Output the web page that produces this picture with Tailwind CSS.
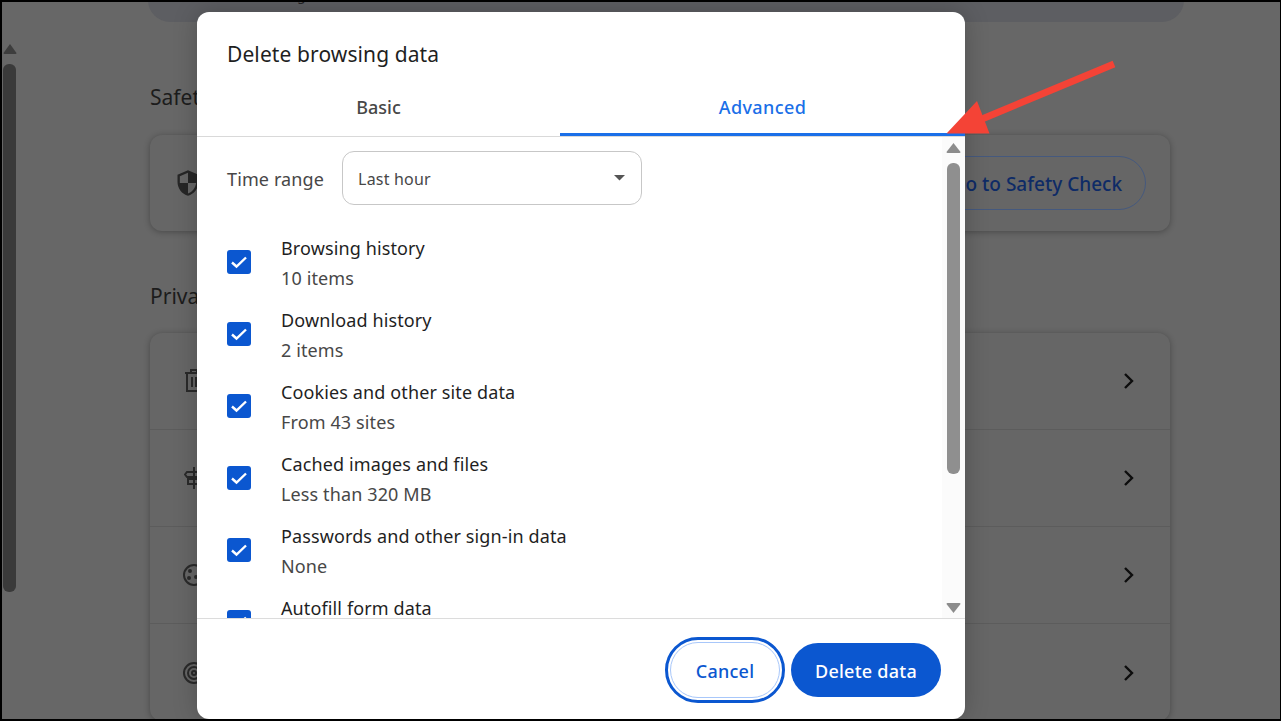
<!DOCTYPE html>
<html lang="en">
<head>
    <meta charset="UTF-8">
    <title>Delete browsing data</title>
    <script src="https://cdn.jsdelivr.net/npm/@tailwindcss/browser@4"></script>
</head>
<body class="bg-black font-['Noto_Sans',sans-serif]">
<div class="relative w-[1281px] h-[721px] overflow-hidden bg-black pt-[2px] pl-[2px] pr-px pb-[2px]">

    <!-- Dimmed settings page behind the dialog -->
    <div class="flex h-[717px] overflow-hidden bg-[#676767]">
        <!-- Page scrollbar -->
        <div class="w-[15px] shrink-0 flex flex-col items-center pt-[42px]">
            <svg width="14" height="10" viewBox="0 0 14 10"><path d="M7 0 L13.5 9 Q13.5 10 12.5 10 L1.5 10 Q.5 10 .5 9 Z" fill="#3d3d3d"/></svg>
            <div class="mt-[10px] w-[13px] h-[528px] rounded-[6px] bg-[#3a3a3a]"></div>
        </div>

        <!-- Settings column -->
        <main class="pl-[133px] w-[1020px] box-content">
            <div class="-mt-[24px] -ml-[2px] w-[1036px] h-[44px] rounded-[24px] bg-[#5d5e62] flex items-center pl-[30px] text-[14px] text-[#222] gap-[14px]">
                <svg width="20" height="20" viewBox="0 0 20 20" fill="none" stroke="#222" stroke-width="2" class="-mt-[12px]"><circle cx="8" cy="8" r="5"/><path d="M12 12l5 5"/></svg>
                <span class="-mt-[12px]">Search settings</span>
            </div>

            <h2 class="mt-[62px] text-[21px] leading-[26px] text-[#1c1c1c]">Safety Check</h2>
            <section class="mt-[25px] h-[96px] rounded-[12px] bg-[#666666] shadow-[0_1px_6px_rgba(0,0,0,0.3)] flex items-center justify-between pl-[24px] pr-[24px]">
                <svg width="28" height="28" viewBox="0 0 24 24"><path d="M12 1L3 5v6c0 5.550 3.840 10.740 9 12 5.160-1.260 9-6.450 9-12V5l-9-4zm0 10.990h7c-.53 4.120-3.280 7.790-7 8.940V12H5V6.300l7-3.110v8.800z" fill="#262626"/></svg>
                <div class="h-[54px] w-[232px] rounded-full border border-[#45597e] flex items-center justify-end pt-[2px] pr-[23px] text-[19px] font-medium text-[#0e2b66]">Go to Safety Check</div>
            </section>

            <h2 class="mt-[52px] text-[21px] leading-[26px] text-[#1c1c1c]">Privacy and security</h2>
            <section class="mt-[24px] rounded-[12px] bg-[#666666] shadow-[0_1px_6px_rgba(0,0,0,0.3)] divide-y divide-[#5c5c5c]">
                <div class="h-[97px] flex items-center justify-between pl-[34px] pr-[34px]">
                    <svg width="20" height="24" viewBox="0 0 20 24" fill="none" stroke="#2a2a2a" stroke-width="2"><path d="M1 4h18M7 4V1h6v3M3 4v18h14V4M8 8v10M12 8v10"/></svg>
                    <svg width="14" height="18" viewBox="0 0 14 18" fill="none" stroke="#0d0d0d" stroke-width="2.4"><path d="M3 2l7 7-7 7"/></svg>
                </div>
                <div class="h-[97px] flex items-center justify-between pl-[34px] pr-[34px]">
                    <svg width="20" height="24" viewBox="0 0 20 24" fill="none" stroke="#2a2a2a" stroke-width="2"><path d="M10 1v22M3 6h14v5H3L1 8.500zM17 13H4v5h13l2-2.500z"/></svg>
                    <svg width="14" height="18" viewBox="0 0 14 18" fill="none" stroke="#0d0d0d" stroke-width="2.4"><path d="M3 2l7 7-7 7"/></svg>
                </div>
                <div class="h-[97px] flex items-center justify-between pl-[32px] pr-[34px]">
                    <svg width="24" height="24" viewBox="0 0 24 24" fill="none" stroke="#2a2a2a" stroke-width="2"><circle cx="12" cy="12" r="10"/><circle cx="8" cy="8" r="1" fill="#2a2a2a"/><circle cx="14" cy="14" r="1" fill="#2a2a2a"/><circle cx="7" cy="15" r="1" fill="#2a2a2a"/></svg>
                    <svg width="14" height="18" viewBox="0 0 14 18" fill="none" stroke="#0d0d0d" stroke-width="2.4"><path d="M3 2l7 7-7 7"/></svg>
                </div>
                <div class="h-[97px] flex items-center justify-between pl-[32px] pr-[34px]">
                    <svg width="24" height="24" viewBox="0 0 24 24" fill="none" stroke="#2a2a2a" stroke-width="2"><circle cx="12" cy="12" r="10"/><circle cx="12" cy="12" r="6"/><circle cx="12" cy="12" r="2"/></svg>
                    <svg width="14" height="18" viewBox="0 0 14 18" fill="none" stroke="#0d0d0d" stroke-width="2.4"><path d="M3 2l7 7-7 7"/></svg>
                </div>
            </section>
        </main>
    </div>

    <!-- Dialog -->
    <div class="absolute left-[197px] top-[12px] w-[768px] h-[707px] rounded-[12px] bg-white flex flex-col overflow-hidden shadow-[0_0_24px_rgba(0,0,0,0.22)]">
        <h1 class="pl-[30px] pt-[27px] text-[21px] tracking-[0.1px] leading-[30px] text-[#1f1f1f]">Delete browsing data</h1>

        <!-- Tabs -->
        <div class="mt-[8px] flex h-[60px] border-b border-[#d9d9d9] text-[18px] font-medium">
            <div class="w-[363px] pt-[18px] text-center leading-[24px] text-[#474747]">Basic</div>
            <div class="w-[405px] h-[59px] pt-[18px] text-center leading-[24px] tracking-[0.4px] text-[#1a6fe8] border-b-[3px] border-[#1a6fe8]">Advanced</div>
        </div>

        <!-- Scrolling content -->
        <div class="flex-1 min-h-0 flex overflow-hidden">
            <div class="flex-1 overflow-hidden pl-[30px] text-[18px] tracking-[0.12px]">
                <div class="mt-[14px] flex items-center gap-[18px]">
                    <span class="pt-[2px] text-[#474747]">Time range</span>
                    <div class="w-[300px] h-[54px] rounded-[12px] border border-[#c7c7c7] flex items-center justify-between pt-[2px] pl-[15px] pr-[16px] text-[16px] tracking-[0.2px] text-[#474747]">
                        Last hour
                        <svg class="mb-[2px]" width="11" height="6" viewBox="0 0 11 6"><path d="M0 0h11L5.500 5.500z" fill="#555555"/></svg>
                    </div>
                </div>
                <div class="mt-[27px] flex flex-col gap-[12px]">
                    <div class="flex items-center h-[60px]">
                        <span class="w-[24px] h-[24px] rounded-[3px] bg-[#0b57d0] flex items-center justify-center"><svg width="16" height="16" viewBox="0 0 16 16" fill="none" stroke="#fff" stroke-width="2.4"><path d="M1 8.500l4.500 4L15 3.500"/></svg></span>
                        <div class="ml-[30px] pt-[2px]"><div class="leading-[30px] text-[#1f1f1f]">Browsing history</div><div class="leading-[30px] text-[#474747]">10 items</div></div>
                    </div>
                    <div class="flex items-center h-[60px]">
                        <span class="w-[24px] h-[24px] rounded-[3px] bg-[#0b57d0] flex items-center justify-center"><svg width="16" height="16" viewBox="0 0 16 16" fill="none" stroke="#fff" stroke-width="2.4"><path d="M1 8.500l4.500 4L15 3.500"/></svg></span>
                        <div class="ml-[30px] pt-[2px]"><div class="leading-[30px] text-[#1f1f1f]">Download history</div><div class="leading-[30px] text-[#474747]">2 items</div></div>
                    </div>
                    <div class="flex items-center h-[60px]">
                        <span class="w-[24px] h-[24px] rounded-[3px] bg-[#0b57d0] flex items-center justify-center"><svg width="16" height="16" viewBox="0 0 16 16" fill="none" stroke="#fff" stroke-width="2.4"><path d="M1 8.500l4.500 4L15 3.500"/></svg></span>
                        <div class="ml-[30px] pt-[2px]"><div class="leading-[30px] text-[#1f1f1f]">Cookies and other site data</div><div class="leading-[30px] text-[#474747]">From 43 sites</div></div>
                    </div>
                    <div class="flex items-center h-[60px]">
                        <span class="w-[24px] h-[24px] rounded-[3px] bg-[#0b57d0] flex items-center justify-center"><svg width="16" height="16" viewBox="0 0 16 16" fill="none" stroke="#fff" stroke-width="2.4"><path d="M1 8.500l4.500 4L15 3.500"/></svg></span>
                        <div class="ml-[30px] pt-[2px]"><div class="leading-[30px] text-[#1f1f1f]">Cached images and files</div><div class="leading-[30px] text-[#474747]">Less than 320 MB</div></div>
                    </div>
                    <div class="flex items-center h-[60px]">
                        <span class="w-[24px] h-[24px] rounded-[3px] bg-[#0b57d0] flex items-center justify-center"><svg width="16" height="16" viewBox="0 0 16 16" fill="none" stroke="#fff" stroke-width="2.4"><path d="M1 8.500l4.500 4L15 3.500"/></svg></span>
                        <div class="ml-[30px] pt-[2px]"><div class="leading-[30px] text-[#1f1f1f]">Passwords and other sign-in data</div><div class="leading-[30px] text-[#474747]">None</div></div>
                    </div>
                    <div class="flex items-start h-[60px]">
                        <span class="mt-[18px] w-[24px] h-[24px] rounded-[3px] bg-[#0b57d0] flex items-center justify-center"><svg width="16" height="16" viewBox="0 0 16 16" fill="none" stroke="#fff" stroke-width="2.4"><path d="M1 8.500l4.500 4L15 3.500"/></svg></span>
                        <div class="ml-[30px] pt-[1px] leading-[30px] text-[#1f1f1f]">Autofill form data</div>
                    </div>
                </div>
            </div>
            <!-- Dialog scrollbar -->
            <div class="w-[23px] shrink-0 bg-[#fbfbfb] flex flex-col items-center pt-[6px] pb-[5px]">
                <svg width="15" height="10" viewBox="0 0 15 10"><path d="M7.500 0 L14.500 9 Q14.500 10 13.500 10 L1.500 10 Q.5 10 .5 9 Z" fill="#8c8c8c"/></svg>
                <div class="mt-[10px] w-[13px] h-[311px] rounded-[6px] bg-[#8f8f8f]"></div>
                <svg class="mt-auto" width="15" height="10" viewBox="0 0 15 10"><path d="M7.500 10 L14.500 1 Q14.500 0 13.500 0 L1.500 0 Q.5 0 .5 1 Z" fill="#8c8c8c"/></svg>
            </div>
        </div>

        <!-- Footer -->
        <div class="h-[101px] shrink-0 border-t border-[#dcdcdc] flex items-center justify-end gap-[6px] pr-[24px] pt-[2px]">
            <div class="w-[120px] h-[66px] rounded-full border-[3px] border-[#0b57d0] p-[2px]">
                <div class="w-full h-full rounded-full border border-[#a8c7fa] flex items-center justify-center pt-[3px] text-[18px] tracking-[0.25px] font-medium text-[#0b57d0]">Cancel</div>
            </div>
            <div class="w-[150px] h-[54px] rounded-full bg-[#0b57d0] flex items-center justify-center pt-[3px] text-[18px] tracking-[0.25px] font-medium text-white">Delete data</div>
        </div>
    </div>

    <!-- Annotation arrow -->
    <svg class="absolute left-[930px] top-[50px]" width="200" height="100" viewBox="930 50 200 100">
        <path d="M1114 64 L970 124" stroke="#f44336" stroke-width="7" fill="none"/>
        <path d="M946.500 133.500 L977 101 L989.500 133.500 Z" fill="#f44336"/>
    </svg>
</div>
</body>
</html>
